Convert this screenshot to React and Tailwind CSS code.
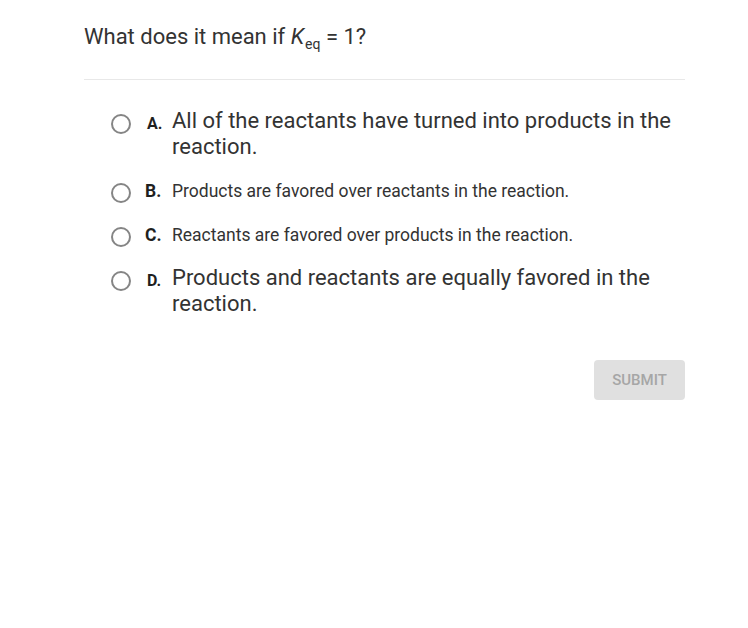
import React, { useState } from "react";

const options = [
  { key: "A", text: "All of the reactants have turned into products in the reaction.", big: true, gap: "mt-[28px]" },
  { key: "B", text: "Products are favored over reactants in the reaction.", big: false, gap: "mt-[20px]" },
  { key: "C", text: "Reactants are favored over products in the reaction.", big: false, gap: "mt-[21px]" },
  { key: "D", text: "Products and reactants are equally favored in the reaction.", big: true, gap: "mt-[18px]" },
];

const Option = ({ opt, selected, onSelect }) => (
  <label
    className={`flex items-start cursor-pointer ${opt.gap}`}
    onClick={() => onSelect(opt.key)}
  >
    <span className="w-[27px] shrink-0" />
    <span
      className={`h-[20px] w-[20px] shrink-0 rounded-full border-2 border-[#858585] flex items-center justify-center ${
        opt.big ? "mt-[6px]" : "mt-[3px]"
      }`}
    >
      {selected && <span className="h-[10px] w-[10px] rounded-full bg-[#858585]" />}
    </span>
    <span
      className={`ml-[14px] w-[27px] shrink-0 font-bold text-[#1f1f1f] ${
        opt.big ? "text-[16px] leading-[26px] pt-[3px] pl-[2px]" : "text-[17.5px] leading-[22px]"
      }`}
    >
      {opt.key}.
    </span>
    <span
      className={`w-[513px] text-[#333] ${
        opt.big ? "text-[22px] leading-[26px]" : "text-[17.5px] leading-[22px]"
      }`}
    >
      {opt.text}
    </span>
  </label>
);

const App = () => {
  const [selected, setSelected] = useState(null);

  return (
    <div
      className="min-h-[628px] w-[748px] bg-white"
      style={{ fontFamily: "Roboto, 'Liberation Sans', sans-serif" }}
    >
      <div className="ml-[84px] w-[601px] pt-[24px]">
        <p className="h-[26px] text-[22px] leading-[26px] text-[#333]">
          What does it mean if <i>K</i>
          <span className="relative top-[5px] ml-[1px] text-[14px]">eq</span> = 1?
        </p>
        <div className="mt-[29px] h-px bg-[#e8e8e8]" />

        <div className="flex flex-col">
          {options.map((opt) => (
            <Option
              key={opt.key}
              opt={opt}
              selected={selected === opt.key}
              onSelect={setSelected}
            />
          ))}
        </div>

        <div className="mt-[43px] flex justify-end">
          <button className="h-[40px] w-[91px] rounded-[4px] bg-[#e0e0e0] text-[15px] font-medium text-[#a6a6a6]">
            SUBMIT
          </button>
        </div>
      </div>
    </div>
  );
};

export default App;
